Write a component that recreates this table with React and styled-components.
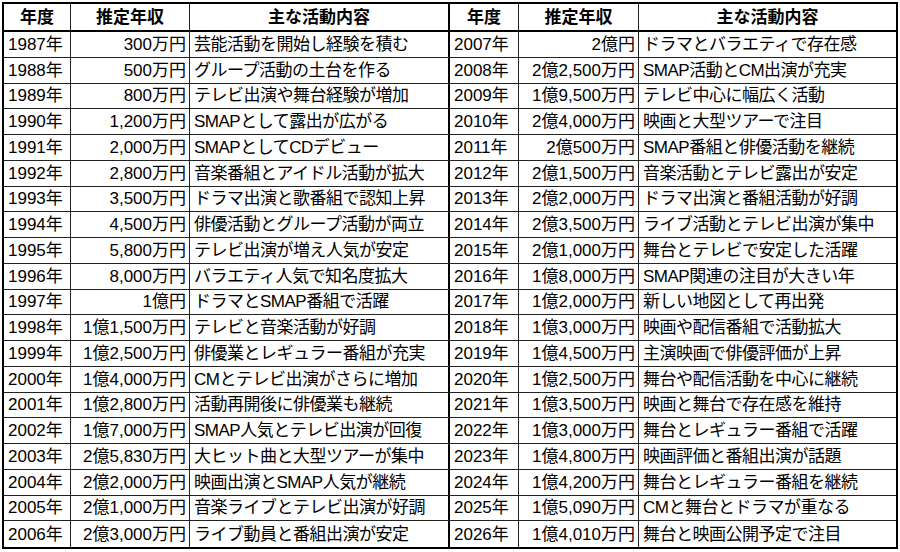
import styled, { createGlobalStyle } from "styled-components"

const GlobalStyle = createGlobalStyle`
  html, body {
    margin: 0;
    padding: 0;
    background: #fff;
  }
  body {
    font-family: "Liberation Sans", "Noto Sans CJK JP", sans-serif;
    color: #000;
  }
`

const Sheet = styled.div`
  margin: 2px;
  width: 896px;
  height: 547px;
  box-sizing: border-box;
  border: 2px solid #000;
  display: grid;
  grid-template-columns: 67px 119px 260px 69px 120px 257px;
  grid-template-rows: 28px repeat(20, 1fr);
`

const Cell = styled.div`
  box-sizing: border-box;
  display: flex;
  align-items: center;
  justify-content: ${(p) =>
    p.$align === "right" ? "flex-end" : p.$align === "center" ? "center" : "flex-start"};
  padding: ${(p) => (p.$align === "right" ? "0 3px 0 0" : "0 0 0 4px")};
  font-size: 17px;
  line-height: 1;
  letter-spacing: ${(p) => (p.$text ? "-0.5px" : "0")};
  white-space: nowrap;
  overflow: hidden;
  border-right: ${(p) => (p.$edge ? "0" : p.$split ? "2px solid #000" : "1px solid #222")};
  border-bottom: ${(p) => (p.$last ? "0" : "1px solid #222")};
`

const HeadCell = styled(Cell)`
  font-weight: 700;
  padding: 0;
  justify-content: center;
  border-bottom: 2px solid #000;
`

const left = [
  ["1987年", "300万円", "芸能活動を開始し経験を積む"],
  ["1988年", "500万円", "グループ活動の土台を作る"],
  ["1989年", "800万円", "テレビ出演や舞台経験が増加"],
  ["1990年", "1,200万円", "SMAPとして露出が広がる"],
  ["1991年", "2,000万円", "SMAPとしてCDデビュー"],
  ["1992年", "2,800万円", "音楽番組とアイドル活動が拡大"],
  ["1993年", "3,500万円", "ドラマ出演と歌番組で認知上昇"],
  ["1994年", "4,500万円", "俳優活動とグループ活動が両立"],
  ["1995年", "5,800万円", "テレビ出演が増え人気が安定"],
  ["1996年", "8,000万円", "バラエティ人気で知名度拡大"],
  ["1997年", "1億円", "ドラマとSMAP番組で活躍"],
  ["1998年", "1億1,500万円", "テレビと音楽活動が好調"],
  ["1999年", "1億2,500万円", "俳優業とレギュラー番組が充実"],
  ["2000年", "1億4,000万円", "CMとテレビ出演がさらに増加"],
  ["2001年", "1億2,800万円", "活動再開後に俳優業も継続"],
  ["2002年", "1億7,000万円", "SMAP人気とテレビ出演が回復"],
  ["2003年", "2億5,830万円", "大ヒット曲と大型ツアーが集中"],
  ["2004年", "2億2,000万円", "映画出演とSMAP人気が継続"],
  ["2005年", "2億1,000万円", "音楽ライブとテレビ出演が好調"],
  ["2006年", "2億3,000万円", "ライブ動員と番組出演が安定"],
]

const right = [
  ["2007年", "2億円", "ドラマとバラエティで存在感"],
  ["2008年", "2億2,500万円", "SMAP活動とCM出演が充実"],
  ["2009年", "1億9,500万円", "テレビ中心に幅広く活動"],
  ["2010年", "2億4,000万円", "映画と大型ツアーで注目"],
  ["2011年", "2億500万円", "SMAP番組と俳優活動を継続"],
  ["2012年", "2億1,500万円", "音楽活動とテレビ露出が安定"],
  ["2013年", "2億2,000万円", "ドラマ出演と番組活動が好調"],
  ["2014年", "2億3,500万円", "ライブ活動とテレビ出演が集中"],
  ["2015年", "2億1,000万円", "舞台とテレビで安定した活躍"],
  ["2016年", "1億8,000万円", "SMAP関連の注目が大きい年"],
  ["2017年", "1億2,000万円", "新しい地図として再出発"],
  ["2018年", "1億3,000万円", "映画や配信番組で活動拡大"],
  ["2019年", "1億4,500万円", "主演映画で俳優評価が上昇"],
  ["2020年", "1億2,500万円", "舞台や配信活動を中心に継続"],
  ["2021年", "1億3,500万円", "映画と舞台で存在感を維持"],
  ["2022年", "1億3,000万円", "舞台とレギュラー番組で活躍"],
  ["2023年", "1億4,800万円", "映画評価と番組出演が話題"],
  ["2024年", "1億4,200万円", "舞台とレギュラー番組を継続"],
  ["2025年", "1億5,090万円", "CMと舞台とドラマが重なる"],
  ["2026年", "1億4,010万円", "舞台と映画公開予定で注目"],
]

const headers = ["年度", "推定年収", "主な活動内容"]

const App = () => {
  return (
    <>
      <GlobalStyle />
      <Sheet>
        {[...headers, ...headers].map((h, i) => (
          <HeadCell key={`h${i}`} $split={i === 2} $edge={i === 5}>
            {h}
          </HeadCell>
        ))}
        {left.map((row, r) => {
          const last = r === left.length - 1
          const cells = [...row, ...right[r]]
          return cells.map((text, c) => (
            <Cell
              key={`${r}-${c}`}
              $align={c % 3 === 1 ? "right" : "left"}
              $text={c % 3 === 2}
              $split={c === 2}
              $edge={c === 5}
              $last={last}
            >
              {text}
            </Cell>
          ))
        })}
      </Sheet>
    </>
  )
}

export default App
